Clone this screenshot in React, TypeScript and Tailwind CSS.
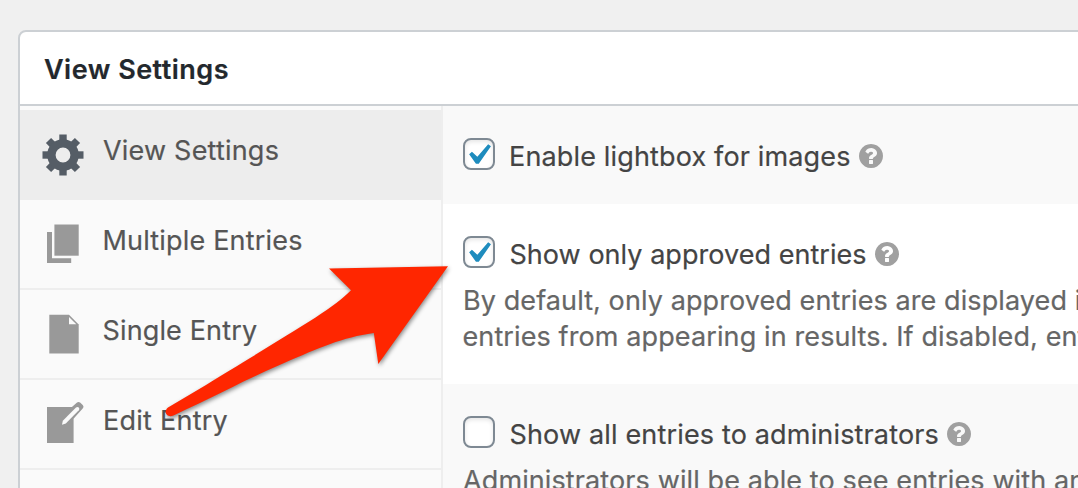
import type { ReactNode } from "react";

function GearIcon() {
  const angles = [0, 45, 90, 135, 180, 225, 270, 315];
  return (
    <svg width="42" height="42" viewBox="-21 -21 42 42" fill="#555d66">
      {angles.map((a) => (
        <rect key={a} x="-3.7" y="-20.5" width="7.4" height="9" transform={`rotate(${a})`} />
      ))}
      <circle r="11.6" fill="none" stroke="#555d66" strokeWidth="8.4" />
    </svg>
  );
}

function PagesIcon() {
  return (
    <svg width="42" height="42" viewBox="0 0 42 42" fill="#999">
      <path d="M5 8h5v26.3h19.2V39H5z" />
      <path d="M12.4 .5h24.3v31.2H12.4z" />
    </svg>
  );
}

function PageIcon() {
  return (
    <svg width="42" height="42" viewBox="0 0 42 42">
      <path fill="#999" d="M7.3.8h19.7l9.7 9.7v29H7.3z" />
      <path fill="#fafafa" d="M27 3l7.3 7.3H27z" />
    </svg>
  );
}

function EditIcon() {
  return (
    <svg width="42" height="46" viewBox="0 0 42 46">
      <path fill="#999" d="M5 9h26.6v36H5z" />
      <path fill="#999" d="M28.500 10.300l6.200-5.600q1.8-1.600 3.700 0l2.300 2.200q1.600 1.800 0 3.500L31.300 21z" />
      <path fill="#fafafa" d="M20 26.7l.8-4L34 9.600q1.500-1.200 2.800 0 1.200 1.400 0 2.700L23.800 25.400z" />
    </svg>
  );
}

function HelpIcon() {
  return (
    <svg className="ml-[8px] mt-[5px] shrink-0" width="24" height="24" viewBox="128 128 1536 1536" fill="#a0a0a0">
      <path d="M1024 1376v-192q0-14-9-23t-23-9h-192q-14 0-23 9t-9 23v192q0 14 9 23t23 9h192q14 0 23-9t9-23zm256-672q0-88-55.5-163t-138.5-116-170-41q-243 0-371 213-15 24 8 42l132 100q7 6 19 6 16 0 25-12 53-68 86-92 34-24 86-24 48 0 85.5 26t37.5 59q0 38-20 61t-68 45q-63 28-115.5 86.5t-52.5 125.5v36q0 14 9 23t23 9h192q14 0 23-9t9-23q0-19 21.5-49.5t54.5-49.5q32-18 49-28.5t46-35 44.5-48 28-60.5 12.5-81zm384 192q0 209-103 385.5t-279.5 279.5-385.5 103-385.5-103-279.5-279.5-103-385.5 103-385.5 279.5-279.5 385.5-103 385.5 103 279.5 279.5 103 385.5z" />
    </svg>
  );
}

function Checkbox({ checked }: { checked?: boolean }) {
  return (
    <span
      role="checkbox"
      aria-checked={!!checked}
      className="-mt-px block size-8 shrink-0 rounded-[8px] border-2 border-[#7e8993] bg-white shadow-[inset_0_2px_4px_rgba(0,0,0,0.1)]"
    >
      {checked && (
        <svg className="-ml-2 -mt-1.5 block max-w-none" width="42" height="42" viewBox="0 0 20 20" fill="#1e8cbe">
          <path d="M14.83 4.89l1.34.94-5.81 8.38H9.02L5.78 9.67l1.34-1.25 2.57 2.4z" />
        </svg>
      )}
    </span>
  );
}

function Tab({ icon, active, label }: { icon: ReactNode; active?: boolean; label: ReactNode }) {
  return (
    <li
      className={
        active
          ? "flex h-[90px] items-start bg-[#ededed] pl-[22px] pt-[23px] text-[#555]"
          : "flex h-[90px] items-start border-b-2 border-[#eee] pl-[22px] pt-[23px] text-[#555]"
      }
    >
      {icon}
      {label}
    </li>
  );
}

function Setting({ className, checked, label, children }: { className: string; checked?: boolean; label: ReactNode; children?: ReactNode }) {
  return (
    <section className={className}>
      <div className="flex items-start text-[#444]">
        <Checkbox checked={checked} />
        {label}
        <HelpIcon />
      </div>
      {children}
    </section>
  );
}

export default function App() {
  return (
    <div className="relative h-[488px] w-full overflow-hidden whitespace-nowrap bg-[#f0f0f0] pl-[18px] pt-[30px] font-['Inter',sans-serif] text-[27px] leading-[35px] [-webkit-text-stroke:0.2px]">
      <div className="h-[600px] w-[1200px] overflow-hidden rounded-tl-[8px] border-2 border-[#ccd0d4] bg-white">
        <h2 className="h-[74px] border-b-2 border-[#ccd0d4] pl-6 pt-5 font-semibold tracking-[0.48px] text-[#23282d]">
          View Settings
        </h2>
        <div className="flex h-full">
          <ul className="w-[423px] shrink-0 border-r-2 border-[#eee] bg-[#fafafa] pt-1">
            <Tab active icon={<span className="mt-px"><GearIcon /></span>} label={<span className="ml-[19px] tracking-[0.2px]">View Settings</span>} />
            <Tab icon={<span className="mt-px"><PagesIcon /></span>} label={<span className="ml-[18.5px] tracking-[0.18px]">Multiple Entries</span>} />
            <Tab icon={<span className="mt-px"><PageIcon /></span>} label={<span className="ml-[18.5px] tracking-[0.14px]">Single Entry</span>} />
            <Tab icon={<span className="-mt-[5px]"><EditIcon /></span>} label={<span className="ml-[19px] tracking-[0.25px]">Edit Entry</span>} />
          </ul>
          <div className="min-w-0 flex-1">
            <Setting
              className="h-[98px] bg-[#f9f9f9] pl-5 pt-[33px]"
              checked
              label={<span className="ml-[14px] tracking-[0.15px]">Enable lightbox for images</span>}
            />
            <Setting
              className="h-[180px] bg-white pl-5 pt-[33px]"
              checked
              label={<span className="ml-[14.5px] tracking-[0.04px]">Show only approved entries</span>}
            >
              <p className="mt-[11px] leading-9 text-[#666]">
                <span className="tracking-[0.09px]">By default, only approved entries are displayed in</span>
                <br />
                <span className="-ml-[0.5px] tracking-[0.11px]">entries from appearing in results. If disabled, entries</span>
              </p>
            </Setting>
            <Setting
              className="h-[180px] bg-[#f9f9f9] pl-5 pt-[33px]"
              label={<span className="ml-[14.5px] tracking-[0.16px]">Show all entries to administrators</span>}
            >
              <p className="mt-[11px] leading-9 tracking-[0.11px] text-[#666]">
                Administrators will be able to see entries with any
              </p>
            </Setting>
          </div>
        </div>
      </div>
      <svg
        className="absolute left-[150px] top-[250px] drop-shadow-[1px_2px_2px_rgba(0,0,0,0.45)]"
        width="310"
        height="190"
        viewBox="150 250 310 190"
      >
        <path
          fill="#ff2600"
          d="M448 266.2L329 268.4L351 290.3C330 311 300 327 206 385L168 407.5C162.5 412 167.500 418.500 173.500 415.500C220 394 255 375 283 363.500C320 347.500 342 337.500 373.800 333L378.300 364z"
        />
      </svg>
    </div>
  );
}
